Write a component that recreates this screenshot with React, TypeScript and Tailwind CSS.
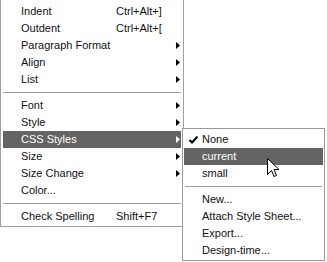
import React from "react";

type Item =
  | { sep: true }
  | { label: string; shortcut?: string; sub?: boolean; active?: boolean };

const mainItems: Item[] = [
  { label: "Indent", shortcut: "Ctrl+Alt+]" },
  { label: "Outdent", shortcut: "Ctrl+Alt+[" },
  { label: "Paragraph Format", sub: true },
  { label: "Align", sub: true },
  { label: "List", sub: true },
  { sep: true },
  { label: "Font", sub: true },
  { label: "Style", sub: true },
  { label: "CSS Styles", sub: true, active: true },
  { label: "Size", sub: true },
  { label: "Size Change", sub: true },
  { label: "Color..." },
  { sep: true },
  { label: "Check Spelling", shortcut: "Shift+F7" },
];

const subItems: { label?: string; check?: boolean; active?: boolean; sep?: boolean }[] = [
  { label: "None", check: true },
  { label: "current", active: true },
  { label: "small" },
  { sep: true },
  { label: "New..." },
  { label: "Attach Style Sheet..." },
  { label: "Export..." },
  { label: "Design-time..." },
];

const Arrow = ({ white }: { white?: boolean }) => (
  <svg width="4" height="7" viewBox="0 0 4 7" className="absolute left-[173px] top-[5px]">
    <path d="M0 0 L4 3.5 L0 7 Z" fill={white ? "#ffffff" : "#000000"} />
  </svg>
);

const Separator = () => (
  <div className="h-[9px] flex items-center px-[2px]">
    <div className="w-full h-[2px] border-t border-[#a0a0a0] border-b border-b-white" />
  </div>
);

const App = () => {
  return (
    <div
      className="relative w-[327px] h-[262px] bg-white overflow-hidden text-[11px] leading-[17px] text-[#111]"
      style={{ fontFamily: '"Liberation Sans", Arial, sans-serif' }}
    >
      <div className="w-[184px] border-l border-r border-b border-[#a0a0a0] pt-[3px] pb-[1px]">
        {mainItems.map((it, i) =>
          "sep" in it ? (
            <Separator key={i} />
          ) : (
            <div
              key={i}
              className={`relative h-[17px] mx-[2px] pl-[18px] flex ${
                it.active ? "bg-[#646464] text-white" : ""
              }`}
            >
              <span className="w-[95px] whitespace-nowrap">{it.label}</span>
              {it.shortcut && <span className="whitespace-nowrap">{it.shortcut}</span>}
              {it.sub && <Arrow white={it.active} />}
            </div>
          )
        )}
      </div>

      <div className="absolute left-[182px] top-[128px] w-[143px] bg-white border border-[#9a9a9a] pt-[2px] pb-[1px]">
        {subItems.map((it, i) =>
          it.sep ? (
            <Separator key={i} />
          ) : (
            <div
              key={i}
              className={`relative h-[17px] mx-[1px] pl-[18px] whitespace-nowrap ${
                it.active ? "bg-[#646464] text-white" : ""
              }`}
            >
              {it.check && (
                <svg width="9" height="8" viewBox="0 0 9 8" className="absolute left-[5px] top-[5px]">
                  <path d="M0.5 4 L3 6.5 L8.5 0.5" stroke="#000" strokeWidth="2" fill="none" />
                </svg>
              )}
              {it.label}
            </div>
          )
        )}
      </div>

      <svg
        width="13"
        height="21"
        viewBox="0 0 13 21"
        className="absolute left-[267px] top-[158px]"
      >
        <path
          d="M0.5 0.5 L0.5 16.5 L4.5 12.5 L7 18.5 L9.5 17.5 L7 11.5 L12 11.5 Z"
          fill="#ffffff"
          stroke="#000000"
          strokeWidth="1"
        />
      </svg>
    </div>
  );
};

export default App;
